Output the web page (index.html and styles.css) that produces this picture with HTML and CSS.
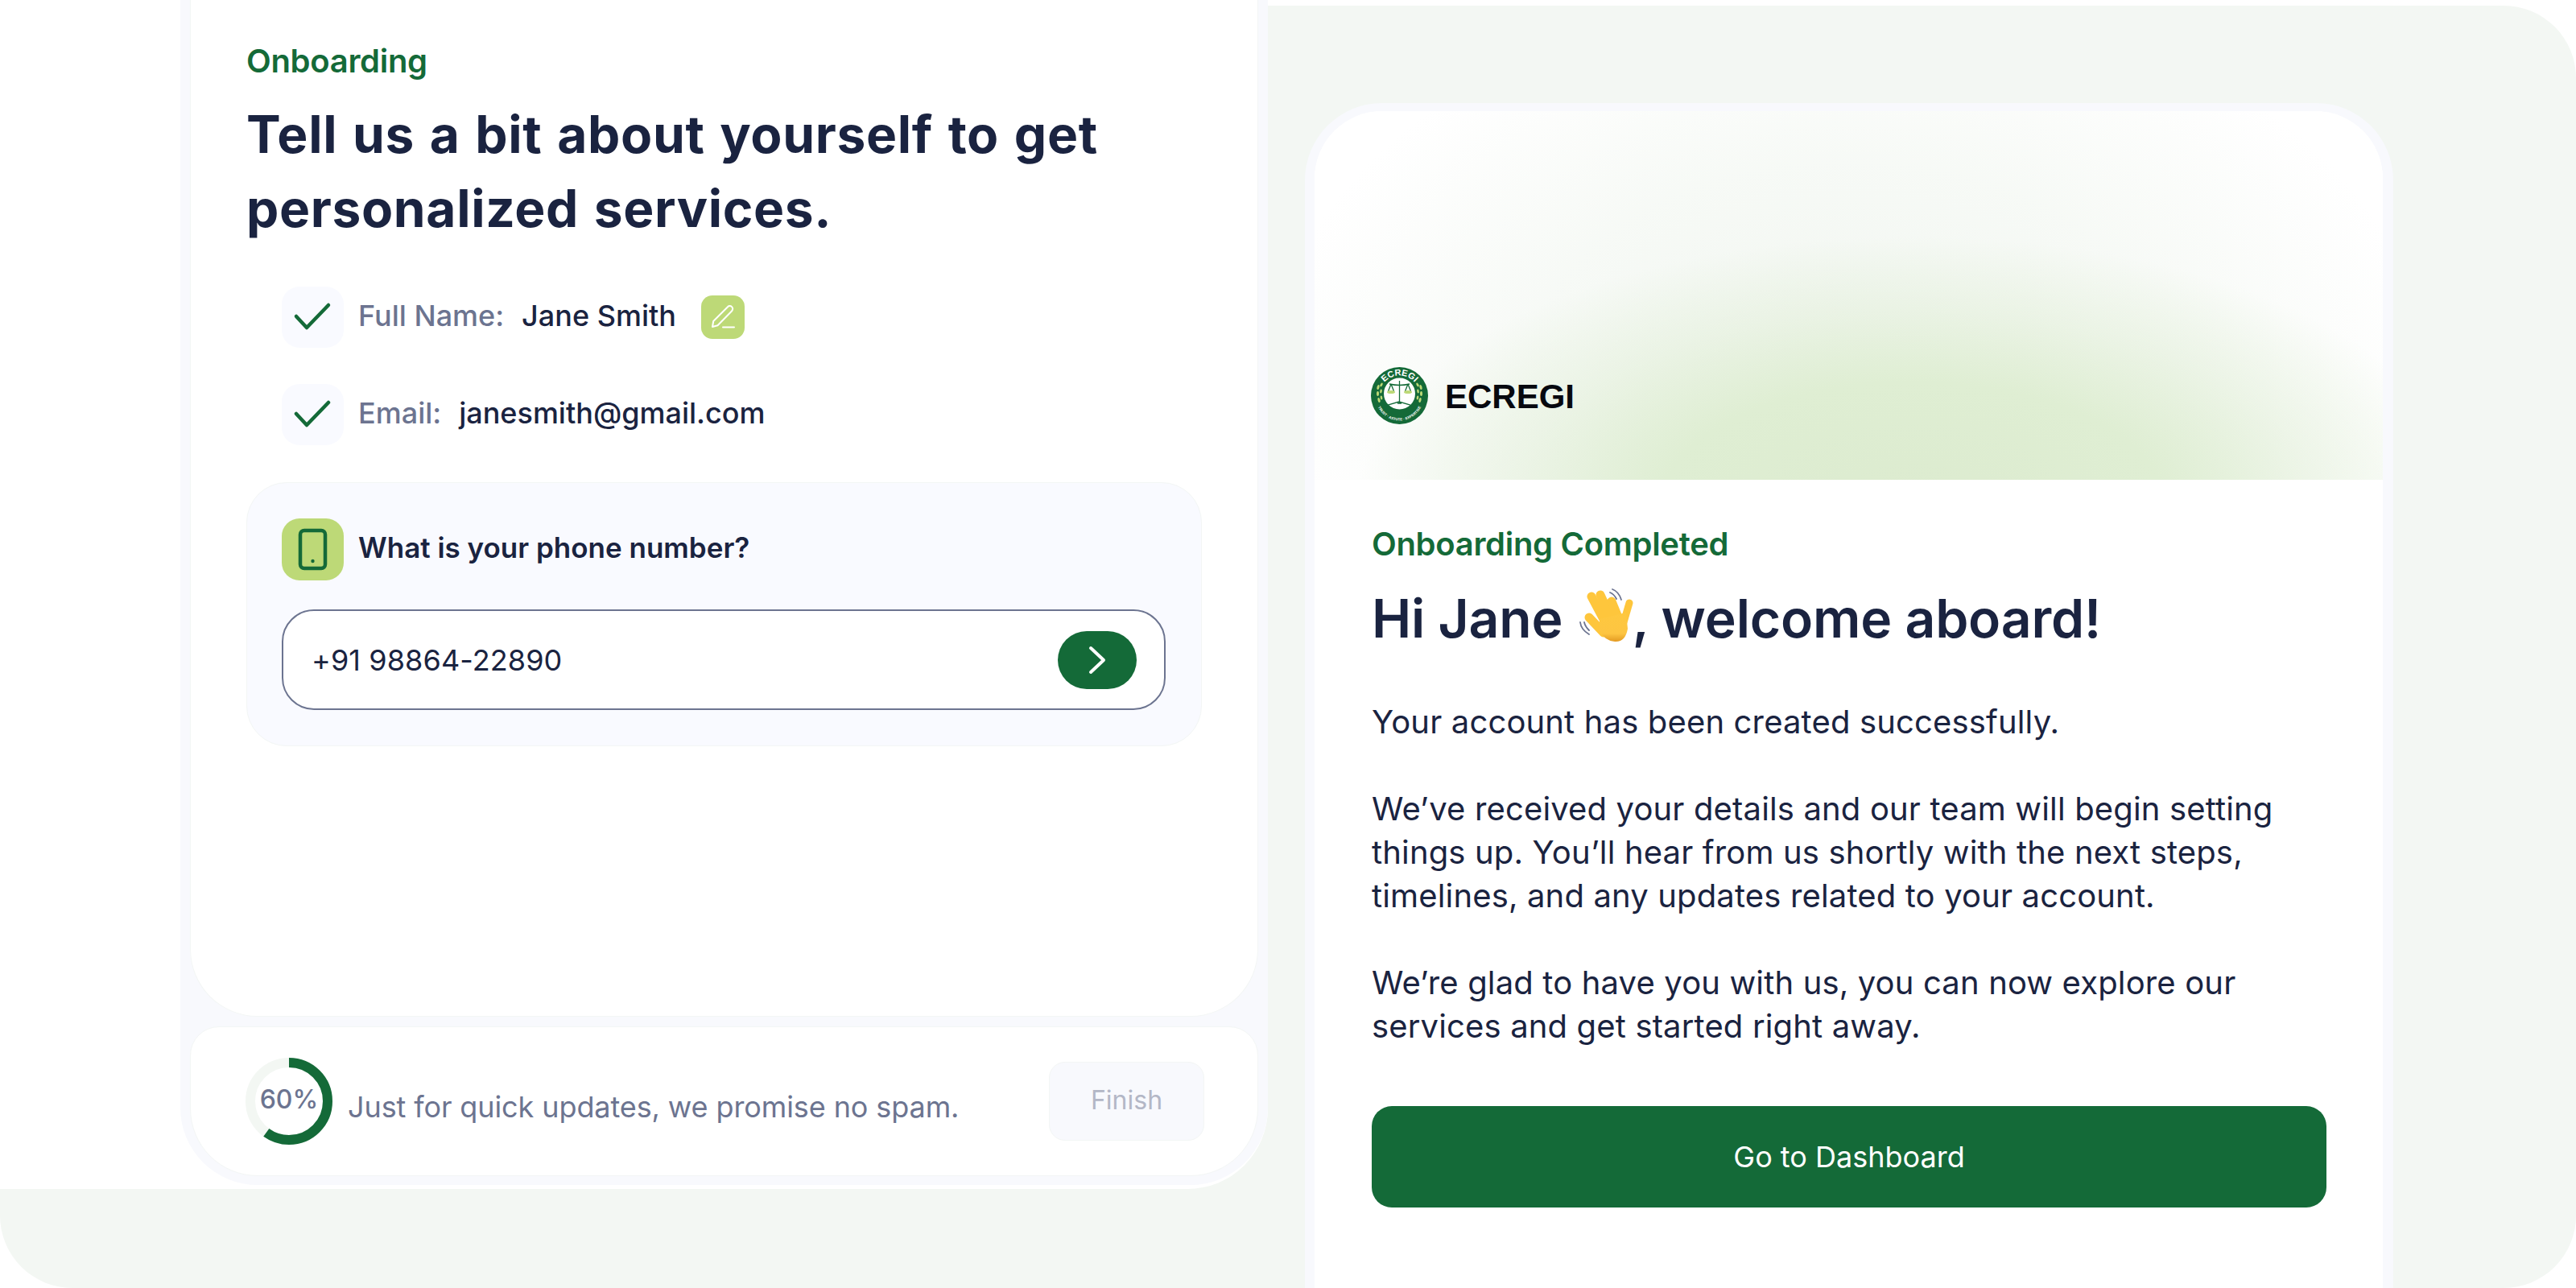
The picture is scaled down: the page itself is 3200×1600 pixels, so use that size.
FILE: index.html
```html
<!DOCTYPE html>
<html lang="en">
<head>
<meta charset="utf-8">
<title>Onboarding</title>
<link rel="stylesheet" href="styles.css">
</head>
<body>
<main class="canvas">
  <div class="sheet"></div>

  <section class="phone phone-left">
    <div class="card">
      <p class="eyebrow">Onboarding</p>
      <h1 class="title">Tell us a bit about yourself to get personalized services.</h1>
      <div class="answer">
        <span class="tile tile-pale">
          <svg class="tile-svg" viewBox="0 0 77 76"><path class="tick" d="M18 37 31 51 58 23"/></svg>
        </span>
        <span class="label">Full Name:</span>
        <span class="value">Jane Smith</span>
        <span class="edit">
          <svg class="edit-svg" viewBox="0 0 54 54"><path class="pen" d="M14 39l1.2-7L33 14.2a3.6 3.6 0 0 1 5.2 5L20.5 37.2zM27 39.5h14"/></svg>
        </span>
      </div>
      <div class="answer answer-email">
        <span class="tile tile-pale">
          <svg class="tile-svg" viewBox="0 0 77 76"><path class="tick" d="M18 37 31 51 58 23"/></svg>
        </span>
        <span class="label">Email:</span>
        <span class="value">janesmith@gmail.com</span>
      </div>
      <div class="panel">
        <div class="question">
          <span class="tile tile-lime">
            <svg class="tile-svg" viewBox="0 0 77 77"><rect class="device" x="23" y="15" width="31" height="47" rx="5"/><circle class="device-dot" cx="38.5" cy="53" r="2.2"/></svg>
          </span>
          <span class="question-text">What is your phone number?</span>
        </div>
        <div class="field">
          <span class="field-text">+91 98864-22890</span>
          <span class="go">
            <svg class="go-svg" viewBox="0 0 24 36"><path class="chev" d="M4 3 20 18 4 33"/></svg>
          </span>
        </div>
      </div>
    </div>
    <div class="foot">
      <div class="ring">
        <svg class="ring-svg" viewBox="0 0 108 108">
          <circle class="ring-track" cx="54" cy="54" r="48"/>
          <circle class="ring-fill" cx="54" cy="54" r="48" pathLength="100" stroke-dasharray="60 100" transform="rotate(-90 54 54)"/>
        </svg>
        <span class="ring-text">60%</span>
      </div>
      <span class="note">Just for quick updates, we promise no spam.</span>
      <span class="finish">Finish</span>
    </div>
  </section>

  <section class="phone phone-right">
    <div class="mail">
      <header class="hero">
        <svg class="logo" viewBox="0 0 71 71">
          <defs>
            <path id="arcTop" d="M10.5 35.5a25 25 0 0 1 50 0"/>
            <path id="arcBot" d="M6 37a29.500 29.500 0 0 0 59 0"/>
          </defs>
          <circle class="logo-base" cx="35.500" cy="35.500" r="35.500"/>
          <circle class="logo-hole" cx="35.500" cy="33" r="19.500"/>
          <text class="logo-top"><textPath href="#arcTop" startOffset="50%" text-anchor="middle">ECREGI</textPath></text>
          <text class="logo-bot"><textPath href="#arcBot" startOffset="50%" text-anchor="middle">TRUST · ASTUTE · EXPERTISE</textPath></text>
          <g class="leaves">
            <ellipse cx="9" cy="25" rx="1.500" ry="3" transform="rotate(15 9 25)"/>
            <ellipse cx="8.500" cy="33" rx="1.500" ry="3"/>
            <ellipse cx="10" cy="41" rx="1.500" ry="3" transform="rotate(-15 10 41)"/>
            <ellipse cx="13" cy="22" rx="1.300" ry="2.600" transform="rotate(30 13 22)"/>
            <ellipse cx="12.500" cy="30" rx="1.300" ry="2.600" transform="rotate(10 12.500 30)"/>
            <ellipse cx="13" cy="38" rx="1.300" ry="2.600" transform="rotate(-10 13 38)"/>
            <ellipse cx="62" cy="25" rx="1.500" ry="3" transform="rotate(-15 62 25)"/>
            <ellipse cx="62.500" cy="33" rx="1.500" ry="3"/>
            <ellipse cx="61" cy="41" rx="1.500" ry="3" transform="rotate(15 61 41)"/>
            <ellipse cx="58" cy="22" rx="1.300" ry="2.600" transform="rotate(-30 58 22)"/>
            <ellipse cx="58.500" cy="30" rx="1.300" ry="2.600" transform="rotate(-10 58.500 30)"/>
            <ellipse cx="58" cy="38" rx="1.300" ry="2.600" transform="rotate(10 58 38)"/>
          </g>
          <path class="scale" d="M35.500 17v28M23 21q12.500 3 25 0M33 45h5M25 21l-3.500 9M25 21l3.500 9M46 21l-3.500 9M46 21l3.500 9M21 47l14-4 14 4"/>
          <ellipse class="pan" cx="25" cy="31" rx="5" ry="2"/>
          <ellipse class="pan" cx="46" cy="31" rx="5" ry="2"/>
        </svg>
        <span class="brand">ECREGI</span>
      </header>
      <div class="mail-body">
        <p class="eyebrow eyebrow-done">Onboarding Completed</p>
        <h2 class="greet">Hi Jane <svg class="wave" viewBox="0 0 69 67" role="img" aria-label="waving hand">
            <defs>
              <linearGradient id="skin" x1="0" y1="0" x2="0" y2="1">
                <stop offset="0" stop-color="#fec83f"/>
                <stop offset=".72" stop-color="#fdc542"/>
                <stop offset="1" stop-color="#e39a22"/>
              </linearGradient>
            </defs>
            <path class="wave-arc" d="M42 1q8 3 11 13M39 5q5 2 8 8M2 42q1 9 11 15M7 42q1 5 6 10"/>
            <path class="finger" d="M13 36 31 55"/>
            <path class="finger" d="M16 10 33 42"/>
            <path class="finger" d="M27 8 41 38"/>
            <path class="finger" d="M41 16 50 38"/>
            <path class="finger finger-s" d="M63 18 56 42"/>
            <path class="palm" d="M26 38 59 30 61 50Q58 67 45 66 32 65 26 52Z"/>
          </svg>, welcome aboard!</h2>
        <p class="copy">Your account has been created successfully.</p>
        <p class="copy">We’ve received your details and our team will begin setting things up. You’ll hear from us shortly with the next steps, timelines, and any updates related to your account.</p>
        <p class="copy">We’re glad to have you with us, you can now explore our services and get started right away.</p>
        <a class="cta">Go to Dashboard</a>
      </div>
    </div>
  </section>
</main>
</body>
</html>
```
FILE: styles.css
```css
* { box-sizing: border-box; }
html, body { margin: 0; padding: 0; background: #fff; }
body { font-family: "Inter", "Liberation Sans", sans-serif; color: #1a2340; }

.canvas {
  position: relative;
  width: 3200px;
  height: 1600px;
  overflow: hidden;
  background: #fff;
}
.canvas::before {
  content: "";
  position: absolute;
  inset: 7px 0 0 0;
  background: #f3f7f3;
  border-radius: 90px;
}
.sheet {
  position: absolute;
  left: 0;
  top: 0;
  width: 1575px;
  height: 1477px;
  background: #fff;
  border-bottom-right-radius: 100px;
}

.phone { position: absolute; background: #f8f9fd; }
.phone-left {
  left: 224px;
  top: 0;
  width: 1351px;
  height: 1472px;
  padding: 0 12px 11px;
  border-radius: 0 0 96px 96px;
  display: flex;
  flex-direction: column;
  gap: 12px;
}
.phone-right {
  left: 1621px;
  top: 128px;
  width: 1352px;
  height: 1472px;
  padding: 10px 13px 0 12px;
  border-radius: 96px 96px 0 0;
}

.card {
  flex: 1;
  background: #fff;
  border: 1px solid #f3f6f5;
  border-top: 0;
  border-radius: 0 0 84px 84px;
  padding: 0 0 0 69px;
}
.eyebrow {
  margin: 0;
  font-family: "Inter", sans-serif;
  font-weight: 600;
  font-size: 40px;
  line-height: 50px;
  letter-spacing: -0.3px;
  color: #146a38;
}
.card .eyebrow { padding-top: 51px; }
.title {
  margin: 20px 0 0;
  width: 1120px;
  font-family: "Inter", sans-serif;
  font-weight: 700;
  font-size: 64px;
  line-height: 92px;
  letter-spacing: .65px;
  word-spacing: 3px;
  color: #1a2340;
}
.answer {
  display: flex;
  align-items: center;
  margin: 51px 0 0 44px;
  height: 76px;
  font-family: "Inter", sans-serif;
  font-size: 36px;
  font-weight: 500;
}
.answer-email { margin-top: 45px; }
.tile {
  flex: none;
  display: block;
  width: 77px;
  height: 76px;
  border-radius: 22px;
}
.tile-pale { background: #f9faff; }
.tile-lime { background: #bdd977; height: 77px; }
.tile-svg { display: block; width: 100%; height: 100%; }
.tick { fill: none; stroke: #146a38; stroke-width: 4.5; stroke-linecap: round; stroke-linejoin: round; }
.label { margin-left: 18px; color: #6c7490; margin-top: -4px; }
.value { margin-left: 22px; color: #1a2340; margin-top: -4px; }
.edit {
  flex: none;
  width: 54px;
  height: 54px;
  margin-left: 31px;
  border-radius: 14px;
  background: #bdd977;
}
.edit-svg { display: block; width: 54px; height: 54px; }
.pen { fill: none; stroke: #fff; stroke-width: 2; stroke-linecap: round; stroke-linejoin: round; }

.panel {
  width: 1187px;
  height: 328px;
  margin-top: 46px;
  padding: 44px 44px 0 43px;
  border: 1px solid #f3f6f5;
  border-radius: 50px;
  background: #f9faff;
}
.question { display: flex; align-items: center; gap: 18px; }
.question-text {
  margin-top: -6px;
  font-family: "Inter", sans-serif;
  font-weight: 600;
  font-size: 35px;
  color: #1a2340;
}
.device { fill: none; stroke: #146a38; stroke-width: 4.5; }
.device-dot { fill: #146a38; }
.field {
  display: flex;
  align-items: center;
  justify-content: space-between;
  height: 125px;
  margin-top: 36px;
  padding: 0 34px 0 35px;
  background: #fff;
  border: 2px solid #6c7490;
  border-radius: 40px;
}
.field-text { font-size: 36px; color: #1a2340; letter-spacing: .1px; }
.go {
  flex: none;
  width: 98px;
  height: 72px;
  border-radius: 36px;
  background: #146a38;
  display: flex;
  align-items: center;
  justify-content: center;
}
.go-svg { display: block; width: 24px; height: 36px; }
.chev { fill: none; stroke: #fff; stroke-width: 4; stroke-linecap: round; stroke-linejoin: round; }

.foot {
  position: relative;
  flex: none;
  height: 186px;
  display: flex;
  align-items: center;
  padding: 0 66px 0 68px;
  background: #fff;
  border: 1px solid #f3f6f5;
  border-radius: 36px 36px 84px 84px;
}
.ring { position: relative; flex: none; width: 108px; height: 108px; }
.ring-svg { display: block; width: 108px; height: 108px; }
.ring-track { fill: none; stroke: #f3f7f3; stroke-width: 12; }
.ring-fill { fill: none; stroke: #146a38; stroke-width: 12; }
.ring-text {
  position: absolute;
  inset: 0 0 6px 0;
  display: flex;
  align-items: center;
  justify-content: center;
  font-size: 32px;
  font-weight: 500;
  color: #6c7490;
}
.note { margin-left: 19px; margin-top: 14px; font-size: 36px; letter-spacing: -.1px; color: #6c7490; }
.finish {
  margin-left: auto;
  width: 193px;
  height: 98px;
  padding-bottom: 4px;
  display: flex;
  align-items: center;
  justify-content: center;
  font-size: 32px;
  color: #b3b7c6;
  background: #f8f9fd;
  border: 1px solid #f3f6f5;
  border-radius: 20px;
}

.mail {
  height: 100%;
  background: #fff;
  border-radius: 84px 84px 0 0;
  overflow: hidden;
}
.hero {
  height: 458px;
  display: flex;
  align-items: flex-end;
  gap: 21px;
  padding: 0 0 69px 70px;
  background:
    radial-gradient(ellipse 52% 72% at 56% 106%, #dcebcf 0%, #dfeed3 45%, rgba(228,240,219,.6) 72%, rgba(255,255,255,0) 100%),
    radial-gradient(ellipse 54% 105% at 50% 72%, rgba(240,245,239,.95) 0%, rgba(244,248,243,.75) 55%, rgba(255,255,255,0) 100%),
    #fff;
}
.logo { display: block; width: 71px; height: 71px; flex: none; }
.logo-base { fill: #146a38; }
.logo-hole { fill: #fff; }
.logo-top { font: 700 11px "Liberation Sans", sans-serif; fill: #fff; }
.logo-bot { font: 700 4.500px "Liberation Sans", sans-serif; fill: #fff; }
.leaves { fill: #bdd977; }
.scale { fill: none; stroke: #146a38; stroke-width: 1.300; }
.pan { fill: #bdd977; }
.brand {
  font-family: "Liberation Sans", sans-serif;
  font-weight: 700;
  font-size: 42px;
  line-height: 50px;
  margin-bottom: 9px;
  color: #07090f;
}

.mail-body { padding: 0 70px 0 71px; }
.eyebrow-done { padding-top: 55px; }
.greet {
  margin: 22px 0 57px;
  font-family: "Inter", sans-serif;
  font-weight: 600;
  font-size: 66px;
  line-height: 90px;
  letter-spacing: -.2px;
  white-space: nowrap;
  color: #1a2340;
}
.wave { display: inline-block; width: 69px; height: 67px; margin: 0 -2px 0 3px; vertical-align: -6px; }
.wave-arc { fill: none; stroke: #6c7490; stroke-width: 1.800; stroke-linecap: round; }
.finger { fill: none; stroke: #fec63c; stroke-width: 11; stroke-linecap: round; }
.finger-s { stroke-width: 9; }
.palm { fill: url(#skin); }
.copy {
  margin: 0 0 54px;
  font-size: 40px;
  line-height: 54px;
  letter-spacing: .15px;
  color: #1a2340;
}
.cta {
  display: flex;
  align-items: center;
  justify-content: center;
  height: 126px;
  margin-top: 72px;
  border-radius: 25px;
  background: #146a38;
  color: #fff;
  font-size: 36px;
}
```
